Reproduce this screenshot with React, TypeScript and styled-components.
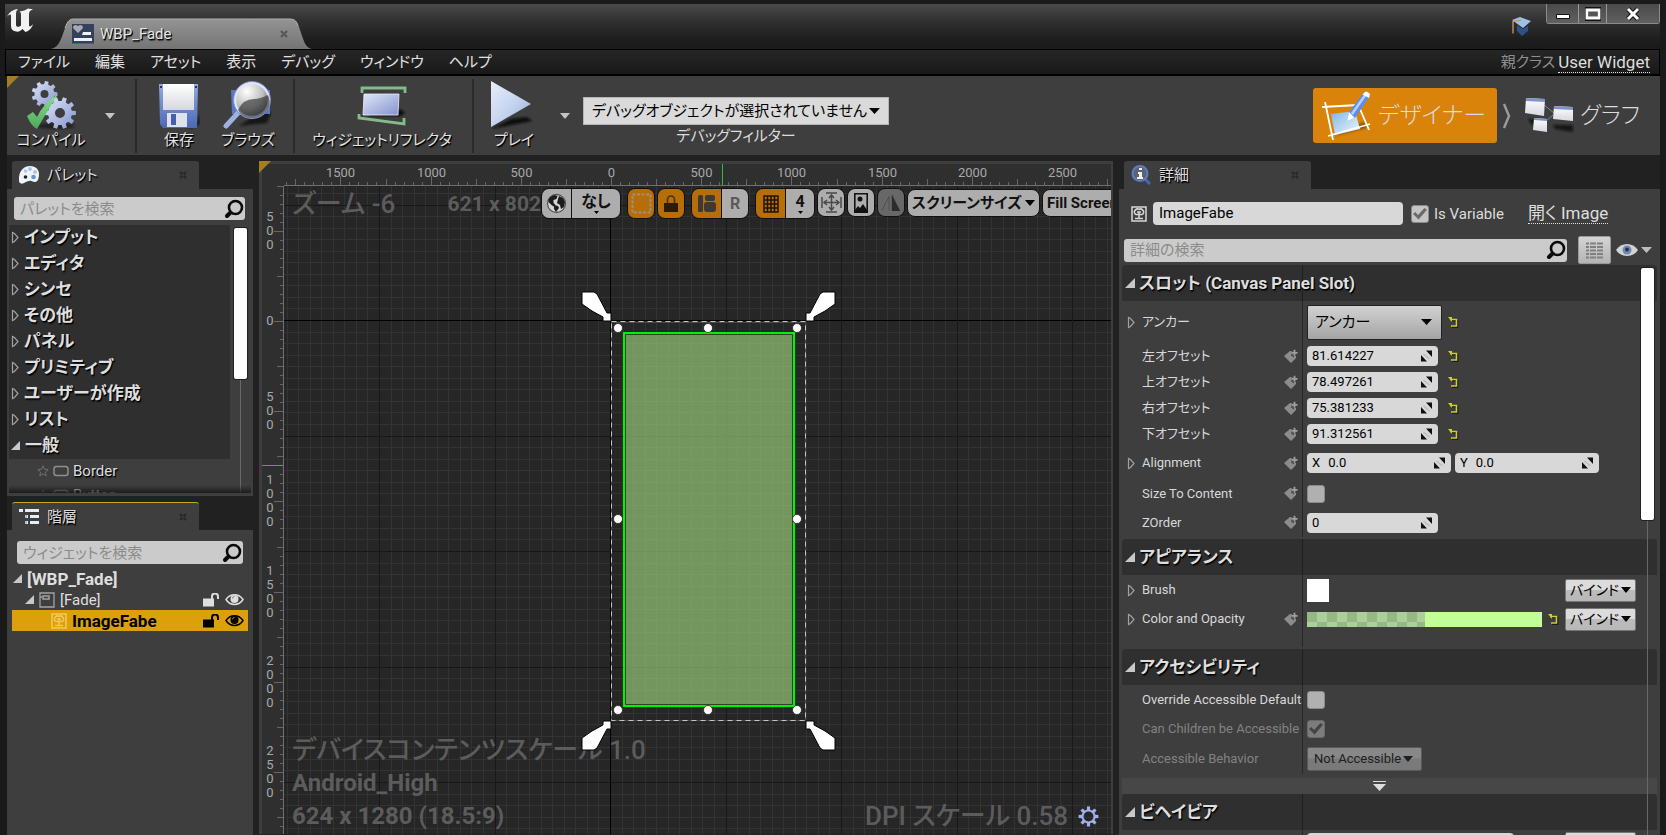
import React from "react";
import styled, { createGlobalStyle, css } from "styled-components";

const GlobalStyle = createGlobalStyle`
  * { box-sizing: border-box; }
  body {
    margin: 0;
    background: #1a1a1a;
    color: #dcdcdc;
    font: 14px/20px Roboto, "Noto Sans CJK JP", sans-serif;
    font-feature-settings: "palt";
    overflow: hidden;
  }
  button, input, select {
    font: inherit;
    font-feature-settings: inherit;
    color: inherit;
    margin: 0;
    padding: 0;
    border: 0;
    border-radius: 0;
    background: none;
  }
  svg { display: block; flex: none; }
  ul { list-style: none; margin: 0; padding: 0; }
`;

const shadow = css`text-shadow: 1px 1px 0 #000, 1px 2px 1px rgba(0, 0, 0, 0.6);`;

const Window = styled.div`
  height: 100vh;
  display: flex;
  flex-direction: column;
  padding: 4px 6px 0 5px;
`;

/* ---------- title bar ---------- */
const TitleBar = styled.header`
  flex: none;
  height: 45px;
  display: flex;
  align-items: flex-start;
  background: linear-gradient(#4b4b4b, #323232 35%, #1d1d1d 80%, #1a1a1a);
`;
const LogoBox = styled.div`
  width: 45px;
  padding: 4px 0 0 1px;
`;
const TabShape = styled.div`
  position: relative;
  width: 262px;
  height: 31px;
  margin-top: 14px;
  padding: 0 24px 0 22px;
  display: flex;
  align-items: center;
  gap: 6px;
  > svg:first-child { position: absolute; left: 0; top: 0; }
  > * { position: relative; }
`;
const TabTitle = styled.span`
  flex: 1;
  font-size: 15px;
  color: #e6e6e6;
  ${shadow}
`;
const WindowTools = styled.div`
  margin-left: auto;
  display: flex;
  align-items: flex-start;
  gap: 14px;
`;
const HatBox = styled.div`padding-top: 12px;`;
const WindowButtons = styled.div`
  display: flex;
  border: 1px solid #8a8a8a;
  border-top: 0;
  border-radius: 0 0 3px 3px;
`;
const WindowButton = styled.button<{ $w: number }>`
  width: ${(p) => p.$w}px;
  height: 19px;
  display: grid;
  place-items: center;
  background: linear-gradient(#4a4a4a, #606060);
  & + & { border-left: 1px solid #999; }
`;

/* ---------- menu ---------- */
const MenuBar = styled.nav`
  flex: none;
  height: 27px;
  display: flex;
  align-items: center;
  gap: 25px;
  padding: 0 9px 0 12px;
  border: 1px solid #000;
  border-bottom-width: 2px;
  background: linear-gradient(#262626, #191919);
  font-size: 15px;
`;
const MenuItem = styled.button`
  color: #e0e0e0;
  white-space: nowrap;
`;
const ParentClass = styled.div`
  margin-left: auto;
  display: flex;
  gap: 3px;
  color: #8f8f8f;
`;
const DottedLink = styled.a`
  color: #dedede;
  font-size: 17px;
  line-height: 20px;
  text-decoration: none;
  border-bottom: 1px dotted #dedede;
  white-space: nowrap;
`;

/* ---------- toolbar ---------- */
const Toolbar = styled.div`
  position: relative;
  flex: none;
  height: 79px;
  margin-left: 2px;
  display: flex;
  align-items: center;
  background: #3e3e3e;
`;
const Corner = styled.span<{ $over?: boolean }>`
  position: absolute;
  left: ${(p) => (p.$over ? -3 : 0)}px;
  top: ${(p) => (p.$over ? -3 : 0)}px;
  width: 12px;
  height: 12px;
  background: #a3801f;
  clip-path: polygon(0 0, 100% 0, 0 100%);
`;
const ToolButton = styled.button<{ $w: number; $after?: number }>`
  width: ${(p) => p.$w}px;
  height: 72px;
  margin-right: ${(p) => p.$after ?? 0}px;
  display: flex;
  flex-direction: column;
  align-items: center;
  color: #e2e2e2;
  font-size: 15px;
  line-height: 20px;
  white-space: nowrap;
  ${shadow}
`;
const ArrowButton = styled.button<{ $w: number; $after: number }>`
  width: ${(p) => p.$w}px;
  height: 72px;
  margin-right: ${(p) => p.$after}px;
  display: grid;
  place-items: center;
`;
const Divider = styled.span`
  width: 2px;
  height: 74px;
  background: #2a2a2a;
`;
const FilterBox = styled.div`
  display: flex;
  flex-direction: column;
  align-items: center;
  gap: 1px;
  padding-top: 12px;
  font-size: 15px;
`;
const SelectBox = styled.div`
  display: grid;
  align-items: center;
  > * { grid-area: 1 / 1; }
  > svg { justify-self: end; margin-right: 9px; pointer-events: none; }
`;
const DebugSelect = styled.select`
  appearance: none;
  width: 306px;
  height: 28px;
  padding-left: 8px;
  background: #dadada;
  border: 1px solid #b5b5b5;
  color: #000;
  font-size: 15px;
`;
const Modes = styled.div`
  margin-left: auto;
  display: flex;
  align-items: center;
  padding-right: 20px;
`;
const ModeButton = styled.button<{ $active?: boolean }>`
  height: 55px;
  padding: 0 ${(p) => (p.$active ? 11 : 0)}px 0 8px;
  display: flex;
  align-items: center;
  gap: ${(p) => (p.$active ? 7 : 5)}px;
  border-radius: 3px;
  background: ${(p) => (p.$active ? "#d9830b" : "none")};
  color: #dcdcdc;
  font-size: 23px;
  font-weight: 300;
  white-space: nowrap;
`;

/* ---------- docks ---------- */
const Workspace = styled.main`
  flex: 1;
  min-height: 0;
  margin-left: 2px;
  padding-top: 6px;
  display: flex;
  gap: 6px;
  background: #212121;
`;
const LeftColumn = styled.div`
  flex: 0 0 246px;
  display: flex;
  flex-direction: column;
  gap: 6px;
`;
const Dock = styled.section<{ $basis?: number }>`
  flex: ${(p) => (p.$basis ? `0 0 ${p.$basis}px` : "1 1 0")};
  min-height: 0;
  min-width: 0;
  display: flex;
  flex-direction: column;
`;
const DetailsDock = styled(Dock)`flex: 0 0 541px;`;
const DockTab = styled.h2<{ $active?: boolean }>`
  flex: none;
  width: 187px;
  height: 28px;
  margin: 0 0 0 5px;
  padding: 0 12px 0 7px;
  display: flex;
  align-items: center;
  gap: 8px;
  border-radius: 3px 3px 0 0;
  border-top: ${(p) => (p.$active ? "1px solid #c9aa1c" : "0")};
  background: #3e3e3e;
  font-size: 15px;
  font-weight: 400;
  ${shadow}
  > span { flex: 1; }
`;
const DockBody = styled.div<{ $pad: string }>`
  flex: 1;
  min-height: 0;
  display: flex;
  flex-direction: column;
  padding: ${(p) => p.$pad};
  background: #3e3e3e;
`;
const SearchBox = styled.label<{ $m: string }>`
  flex: 1 0 auto;
  height: 23px;
  margin: ${(p) => p.$m};
  padding: 0 1px 0 6px;
  display: flex;
  align-items: center;
  border-radius: 3px;
  background: #cbcbcb;
  input {
    flex: 1;
    min-width: 0;
    height: 23px;
    outline: 0;
    color: #222;
    font-size: 15px;
  }
  input::placeholder { color: #8b8b8b; opacity: 1; }
`;
const SearchRow = styled.div`
  flex: none;
  display: flex;
  align-items: center;
`;

/* ---------- palette ---------- */
const PaletteArea = styled.div`
  position: relative;
  flex: 1;
  min-height: 0;
  overflow: hidden;
  padding-right: 21px;
  &::after {
    content: "";
    position: absolute;
    left: 0;
    right: 0;
    bottom: 0;
    height: 8px;
    background: linear-gradient(rgba(20, 20, 20, 0), rgba(20, 20, 20, 0.8));
  }
`;
const PaletteGroup = styled.button`
  width: 100%;
  height: 26px;
  padding: 0 0 2px 2px;
  display: flex;
  align-items: center;
  gap: 5px;
  background: #2f2f2f;
  color: #dedede;
  font-size: 17px;
  font-weight: 700;
  text-align: left;
  ${shadow}
`;
const PaletteItem = styled.li`
  height: 24px;
  padding-left: 28px;
  display: flex;
  align-items: center;
  gap: 4px;
  font-size: 15px;
  ${shadow}
`;
const ScrollTrack = styled.div<{ $right: number; $top: number; $thumb: number }>`
  position: absolute;
  right: ${(p) => p.$right}px;
  top: ${(p) => p.$top}px;
  bottom: 0;
  width: 13px;
  background: linear-gradient(#686868, #686868) center / 1px 100% no-repeat;
  &::before {
    content: "";
    display: block;
    height: ${(p) => p.$thumb}px;
    border-radius: 2px;
    background: #fff;
    box-shadow: 0 0 0 1px #222;
  }
`;

/* ---------- hierarchy ---------- */
const TreeRow = styled.li<{ $indent: number; $selected?: boolean; $strong?: boolean }>`
  height: 21px;
  padding: 0 4px 0 ${(p) => p.$indent}px;
  display: flex;
  align-items: center;
  gap: 5px;
  font-size: ${(p) => (p.$strong ? 17 : 15)}px;
  font-weight: ${(p) => (p.$strong ? 700 : 400)};
  background: ${(p) => (p.$selected ? "#dca00a" : "none")};
  color: ${(p) => (p.$selected ? "#000" : "#dedede")};
  > span { flex: 1; }
`;
const IconButton = styled.button`
  display: grid;
  place-items: center;
`;

/* ---------- designer ---------- */
const Designer = styled.section`
  position: relative;
  flex: 1 1 0;
  min-width: 0;
  margin-bottom: 1px;
  display: grid;
  grid-template: 22px minmax(0, 1fr) / 22px minmax(0, 1fr);
  border: 2px solid #3e3e3e;
  border-left-width: 3px;
  border-top-width: 3px;
  border-bottom: 0;
  background: #2f2f2f;
`;
const RulerSvg = styled.svg`
  width: 100%;
  height: 100%;
  overflow: hidden;
  text { font-size: 13px; fill: #a8a8a8; }
`;
const RulerCell = styled.div`
  min-width: 0;
  min-height: 0;
  overflow: hidden;
`;
const Viewport = styled.div`
  position: relative;
  min-width: 0;
  min-height: 0;
  overflow: hidden;
  background: #262626;
  > svg { position: absolute; inset: 0; width: 100%; height: 100%; }
`;
const Overlay = styled.div`
  position: absolute;
  inset: 0;
  display: flex;
  flex-direction: column;
  justify-content: space-between;
`;
const OverlayText = styled.p<{ $size?: number; $kana?: boolean }>`
  margin: 0;
  font-size: ${(p) => p.$size ?? 24}px;
  line-height: 33px;
  font-weight: ${(p) => (p.$kana ? 500 : 700)};
  color: #5c5c5c;
  white-space: nowrap;
`;
const OverlayTop = styled.div`
  display: flex;
  align-items: flex-start;
  padding: 2px 0 0 8px;
  > p:first-child { flex: 1; }
`;
const OverlayBottom = styled.div`
  display: flex;
  align-items: flex-end;
  justify-content: space-between;
  padding: 0 12px 1px 8px;
`;
const DpiLine = styled.div`
  display: flex;
  align-items: center;
  gap: 10px;
`;
const ViewTools = styled.div`
  flex: 0 0 570px;
  display: flex;
  align-items: flex-start;
  gap: 2px;
  overflow: hidden;
  color: #111;
  font-size: 16px;
  font-weight: 700;
`;
const ToolGroup = styled.div<{ $after?: number }>`
  flex: none;
  display: flex;
  margin-right: ${(p) => p.$after ?? 0}px;
  overflow: hidden;
  border: 1px solid #111;
  border-radius: 8px;
`;
const ViewButton = styled.button<{ $w: number; $h?: number; $tone?: "on" | "off"; $muted?: boolean }>`
  width: ${(p) => p.$w}px;
  height: ${(p) => p.$h ?? 29}px;
  display: flex;
  flex-direction: column;
  align-items: center;
  justify-content: center;
  line-height: 18px;
  color: ${(p) => (p.$muted ? "#5a5a5a" : "#111")};
  background: ${(p) => (p.$tone === "on" ? "#b86e08" : p.$tone === "off" ? "#686868" : "#adadad")};
  & + & { border-left: ${(p) => (p.$muted ? 0 : 1)}px solid #111; }
`;
const DropButton = styled.button<{ $w: number }>`
  flex: none;
  width: ${(p) => p.$w}px;
  height: 28px;
  margin-top: 1px;
  padding: 0 4px;
  display: flex;
  align-items: center;
  gap: 3px;
  border: 1px solid #111;
  border-radius: 8px;
  background: #adadad;
  font-size: 15px;
  white-space: nowrap;
`;

/* ---------- details ---------- */
const NameRow = styled.div`
  display: flex;
  align-items: center;
  height: 23px;
  margin: 0 0 11px 9px;
  font-size: 15px;
`;
const NameInput = styled.input`
  width: 250px;
  height: 23px;
  margin: 0 8px 0 6px;
  padding: 0 6px 1px;
  border-radius: 4px;
  background: #d8d8d8;
  color: #000;
`;
const CheckLabel = styled.label`
  display: flex;
  align-items: center;
  gap: 5px;
  width: 117px;
`;
const Check = styled.input`
  appearance: none;
  width: 18px;
  height: 18px;
  border-radius: 3px;
  border: 1px solid #8a8a8a;
  background: #b0b0b0;
  display: grid;
  place-items: center;
  &:checked { background: #c4c4c4; }
  &:disabled { background: #7c7c7c; border-color: #696969; }
  &:checked::before {
    content: "";
    width: 14px;
    height: 12px;
    background: #6a6a6a;
    clip-path: polygon(0 55%, 16% 38%, 36% 62%, 82% 4%, 100% 18%, 40% 100%);
  }
  &:disabled::before { background: #444; }
`;
const GridButton = styled.button`
  width: 33px;
  height: 28px;
  display: grid;
  place-items: center;
  border: 1px solid #999;
  border-radius: 2px;
  background: linear-gradient(#d4d4d4, #b4b4b4);
  margin: 0 5px 0 11px;
`;
const EyeButton = styled.button`
  display: flex;
  align-items: center;
  gap: 3px;
  margin-right: 5px;
`;
const Properties = styled.div`
  position: relative;
  flex: 1;
  min-height: 0;
  overflow: hidden;
  margin-top: 1px;
`;
const Category = styled.button`
  width: 100%;
  height: 36px;
  display: grid;
  grid-template-columns: 180px 1fr;
  border-radius: 4px 4px 0 0;
  background: linear-gradient(90deg, transparent 180px, #1f1f1f 180px, #1f1f1f 181px, transparent 181px), #2f2f2f;
  color: #dedede;
  font-size: 17px;
  font-weight: 700;
  text-align: left;
  white-space: nowrap;
  > span {
    display: flex;
    align-items: center;
    gap: 4px;
    padding-left: 3px;
  }
  ${shadow}
`;
const Row = styled.div<{ $h: number; $dim?: boolean }>`
  height: ${(p) => p.$h}px;
  display: grid;
  grid-template-columns: 180px minmax(0, 1fr);
  font-size: 13px;
  color: ${(p) => (p.$dim ? "#828282" : "#d8d8d8")};
`;
const LabelCell = styled.div`
  display: flex;
  align-items: center;
  overflow: hidden;
  padding: 0 4px 0 5px;
  white-space: nowrap;
  label { flex: 1 0 auto; padding-left: 1px; }
`;
const Twisty = styled.span`flex: 0 0 14px;`;
const ValueCell = styled.div`
  display: flex;
  align-items: center;
  gap: 4px;
  padding: 0 21px 0 4px;
  border-left: 1px solid #272727;
`;
const Spacer = styled.div<{ $h: number }>`height: ${(p) => p.$h}px;`;
const ResetButton = styled.button<{ $gap?: number }>`
  margin-left: ${(p) => p.$gap ?? 2}px;
`;
const NumberBox = styled.label<{ $w: number }>`
  width: ${(p) => p.$w}px;
  height: 20px;
  padding: 0 6px 0 5px;
  display: flex;
  align-items: center;
  gap: 8px;
  border-radius: 4px;
  background: #d8d8d8;
  color: #000;
  input { flex: 1; min-width: 0; height: 20px; outline: 0; }
`;
const AnchorButton = styled.button`
  width: 135px;
  height: 35px;
  padding: 0 9px 0 7px;
  display: flex;
  align-items: center;
  justify-content: space-between;
  border: 1px solid #222;
  border-radius: 2px;
  background: linear-gradient(#d2d2d2, #a4a4a4);
  color: #000;
  font-size: 15px;
`;
const BindButton = styled.button`
  width: 71px;
  height: 23px;
  margin-left: auto;
  display: flex;
  align-items: center;
  justify-content: center;
  gap: 2px;
  border: 1px solid #777;
  border-radius: 2px;
  background: linear-gradient(#dcdcdc 45%, #bcbcbc 50%, #b8b8b8);
  color: #000;
  font-size: 14px;
`;
const BrushSwatch = styled.button`
  width: 22px;
  height: 23px;
  background: #fff;
`;
const ColorBar = styled.button`
  width: 235px;
  height: 15px;
  background:
    linear-gradient(90deg, transparent 50%, #c1fe98 50%),
    repeating-conic-gradient(#acd09a 0 25%, #97b886 0 50%) 0 0 / 20px 20px;
`;
const BehaviorSelect = styled.select`
  appearance: none;
  width: 115px;
  height: 24px;
  padding-left: 6px;
  border: 1px solid #5a5a5a;
  border-radius: 2px;
  background: linear-gradient(#888 45%, #7a7a7a 50%);
  &:disabled { color: #202020; opacity: 1; }
`;
const MoreBar = styled.button`
  width: 100%;
  height: 16px;
  padding-right: 21px;
  display: grid;
  place-items: center;
  background: #474747;
`;
const TextField = styled.input`
  width: 207px;
  height: 20px;
  border-radius: 4px;
  background: #d8d8d8;
`;

/* ---------- small icons ---------- */
const Caret = ({ w = 11, h = 6, fill = "#000" }: { w?: number; h?: number; fill?: string }) => (
  <svg width={w} height={h} viewBox="0 0 10 6" preserveAspectRatio="none">
    <path d="M0 0h10L5 6z" fill={fill} />
  </svg>
);
const CloseMark = ({ color = "#272727" }: { color?: string }) => (
  <svg width="8" height="8" viewBox="0 0 8 8">
    <path d="M1 1l6 6M7 1L1 7" stroke={color} strokeWidth="2" />
    <path d="M3.500 3.500h1v1h-1z" fill="#777" />
  </svg>
);
const Open = ({ s = 11 }: { s?: number }) => (
  <svg width={s} height={s} viewBox="0 0 10 10">
    <path d="M10 0v10H0z" fill="#c8c8c8" />
  </svg>
);
const Closed = () => (
  <svg width="8" height="13" viewBox="0 0 8 13">
    <path d="M1.500 1.500v10l2-1 3.500-4-3.500-4z" fill="none" stroke="#a2a2a2" strokeWidth="1.200" />
  </svg>
);
const Magnifier = () => (
  <svg width="20" height="20" viewBox="0 0 20 20">
    <circle cx="11.500" cy="8.500" r="6.500" fill="none" stroke="#0a0a0a" strokeWidth="2.600" />
    <path d="M6.500 13.500L3 17" stroke="#0a0a0a" strokeWidth="4" strokeLinecap="round" />
  </svg>
);
const Reset = ({ gap }: { gap?: number }) => (
  <ResetButton $gap={gap} aria-label="Reset to default">
    <svg width="11" height="11" viewBox="0 0 11 11">
      <path d="M2 2.500h6.500V9H3" transform="translate(1 1)" fill="none" stroke="#111" strokeWidth="1.500" />
      <path d="M2 2.500h6.500V9H3" fill="none" stroke="#c9cf36" strokeWidth="1.600" />
      <path d="M0 0h4v5z" fill="#c9cf36" />
    </svg>
  </ResetButton>
);
const Tag = () => (
  <svg width="14" height="15" viewBox="0 0 14 15">
    <path d="M0 7l6-5h3v3h3v4l-5 5z" fill="#8c8c8c" />
    <path d="M10.500 1v6M7.500 4h6" stroke="#3e3e3e" strokeWidth="3.400" />
    <path d="M10.500 0.800v6M7.500 3.800h6" stroke="#a0a0a0" strokeWidth="1.800" />
    <path d="M7 6l3 2" stroke="#3e3e3e" />
  </svg>
);
const SpinMark = () => (
  <svg width="11" height="12" viewBox="0 0 11 12">
    <path d="M5 0.500h6V7zM0 5v6.500h6z" fill="#111" />
    <path d="M2.500 4l6 5" stroke="#bbb" strokeWidth="1.200" />
  </svg>
);
const Eye = ({ color }: { color: string }) => (
  <svg width="19" height="13" viewBox="0 0 19 13">
    <path d="M1 6.500C5 0 14 0 18 6.500 14 13 5 13 1 6.500z" fill="none" stroke={color} strokeWidth="1.500" />
    <circle cx="9.500" cy="6" r="4" fill={color} />
    <path d="M7.500 5.500a2 2 0 012-2" fill="none" stroke="#888" />
  </svg>
);
const Unlock = ({ color }: { color: string }) => (
  <svg width="17" height="14" viewBox="0 0 17 14">
    <path d="M0 5.500h11v8H0z" fill={color} />
    <path d="M9 6V3.500a3 3 0 016 0V6" fill="none" stroke={color} strokeWidth="2" />
  </svg>
);
const ImageIcon = ({ color }: { color: string }) => (
  <svg width="16" height="16" viewBox="0 0 16 16" fill="none" stroke={color}>
    <path d="M1 1h14v14H1z" strokeWidth="1.500" />
    <path d="M5 8.500a2.500 2.500 0 01-.5-4.500 2.500 2.500 0 013.500-.5 2.500 2.500 0 013.500.5 2.500 2.500 0 01-.5 4.500z" strokeWidth="1.500" />
    <path d="M6 6h4M8 6v6M4 12.500h8" strokeWidth="1.500" />
  </svg>
);

/* ---------- gradients shared by the large icons ---------- */
const DefsSvg = styled.svg`position: absolute;`;
const Defs = () => (
  <DefsSvg width="0" height="0">
    <defs>
      <linearGradient id="steel" x1="0" y1="0" x2="1" y2="1">
        <stop offset="0" stopColor="#dfe6fa" />
        <stop offset="1" stopColor="#8494cc" />
      </linearGradient>
      <linearGradient id="blue" x1="0" y1="0" x2="0" y2="1">
        <stop offset="0" stopColor="#93aadf" />
        <stop offset="1" stopColor="#4c68b4" />
      </linearGradient>
      <linearGradient id="paper" x1="0" y1="0" x2="0" y2="1">
        <stop offset="0" stopColor="#ffffff" />
        <stop offset="1" stopColor="#d5d8e0" />
      </linearGradient>
      <linearGradient id="play" x1="0" y1="0" x2="1" y2="1">
        <stop offset="0" stopColor="#e9eefc" />
        <stop offset="0.550" stopColor="#c3d3ee" />
        <stop offset="1" stopColor="#94a4d6" />
      </linearGradient>
      <linearGradient id="tick" x1="0" y1="0" x2="0" y2="1">
        <stop offset="0" stopColor="#8fe08c" />
        <stop offset="1" stopColor="#4ba85a" />
      </linearGradient>
      <linearGradient id="sky" x1="0" y1="0" x2="1" y2="1">
        <stop offset="0" stopColor="#7fb4e6" />
        <stop offset="1" stopColor="#f2fafd" />
      </linearGradient>
      <linearGradient id="tab" x1="0" y1="0" x2="0" y2="1">
        <stop offset="0" stopColor="#949494" />
        <stop offset="1" stopColor="#747474" />
      </linearGradient>
      <radialGradient id="lens" cx="0.350" cy="0.250" r="0.800">
        <stop offset="0" stopColor="#ffffff" />
        <stop offset="0.600" stopColor="#bdbdbd" />
        <stop offset="1" stopColor="#4a4a4a" />
      </radialGradient>
      <filter id="soft" x="-20%" y="-50%" width="140%" height="200%">
        <feGaussianBlur stdDeviation="1" />
      </filter>
    </defs>
  </DefsSvg>
);

const gearPath = (cx: number, cy: number, r: number, teeth: number, hole: number, depth: number) => {
  const pts: string[] = [];
  const step = (Math.PI * 2) / teeth;
  for (let i = 0; i < teeth; i++) {
    const a = i * step;
    [[-0.3, r - depth], [-0.2, r], [0.2, r], [0.3, r - depth]].forEach(([k, rad]) => {
      pts.push(`${(cx + Math.cos(a + k * step) * rad).toFixed(2)} ${(cy + Math.sin(a + k * step) * rad).toFixed(2)}`);
    });
  }
  return `M${pts.join("L")}Z M${cx - hole} ${cy}a${hole} ${hole} 0 1 0 ${hole * 2} 0a${hole} ${hole} 0 1 0 ${-hole * 2} 0Z`;
};

const CompileIcon = () => (
  <svg width="50" height="50" viewBox="0 0 50 50">
    <ellipse cx="30" cy="46" rx="19" ry="3" fill="#111" opacity="0.600" filter="url(#soft)" />
    <path d={gearPath(18.5, 14, 13, 9, 4, 3)} fill="url(#steel)" fillRule="evenodd" />
    <path d={gearPath(34, 33, 16, 10, 5, 4)} fill="url(#steel)" fillRule="evenodd" />
    <path d="M1 36l6-4 4 5Q17 24 32 14 22 30 11 49 5 46 1 36z" fill="url(#tick)" />
  </svg>
);
const SaveIcon = () => (
  <svg width="42" height="50" viewBox="0 0 42 50">
    <path d="M5 44l33-2 4-8v10l-8 4z" fill="#111" opacity="0.700" filter="url(#soft)" />
    <path d="M1 4h39l-1 44H5l-3-4z" fill="url(#blue)" />
    <path d="M5 4h31v26H5z" fill="url(#paper)" />
    <path d="M9 33h20v14H9z" fill="#dfe2ea" />
    <path d="M13 34h5v11h-5z" fill="#4661ab" />
    <path d="M2 6h2v2H2zM37 6h2v2h-2z" fill="#26355f" />
  </svg>
);
const BrowseIcon = () => (
  <svg width="50" height="50" viewBox="0 0 50 50">
    <path d="M16 46l28-3 4-10-8-3z" fill="#0c0c0c" opacity="0.800" filter="url(#soft)" />
    <path d="M8 10h39v24H9z" fill="#5b78c0" />
    <path d="M15 33L3 46" stroke="#9fb0e0" strokeWidth="5" strokeLinecap="round" />
    <circle cx="29" cy="20" r="17" fill="url(#lens)" stroke="#dfe6fb" strokeWidth="2.500" />
    <path d="M15 30q5-11 16-11 6 0 14-4a16 16 0 01-30 15z" fill="#333" opacity="0.650" />
    <circle cx="29" cy="20" r="18.500" fill="none" stroke="#7d92cc" />
  </svg>
);
const ReflectorIcon = () => (
  <svg width="50" height="50" viewBox="0 0 50 50">
    <path d="M10 36h34l4-4-6-3z" fill="#0d0d0d" filter="url(#soft)" />
    <path d="M7 14h35l-1 21H6z" fill="url(#steel)" stroke="#eef" strokeWidth="0.800" />
    <path d="M5 13V8h43v5M2 34v4l45 6v-6" fill="none" stroke="#84bb8b" strokeWidth="2.800" />
  </svg>
);
const PlayIcon = () => (
  <svg width="48" height="50" viewBox="0 0 48 50">
    <path d="M1 49l41-8-5-4-16 2z" fill="#0d0d0d" filter="url(#soft)" />
    <path d="M1 1l40 23L1 47z" fill="url(#play)" />
  </svg>
);
const DesignIcon = () => (
  <svg width="50" height="52" viewBox="0 0 50 52">
    <path d="M14 46l32-8-2-6-14 4z" fill="#5d3a06" opacity="0.600" filter="url(#soft)" />
    <path d="M10 24l24-3 5 18-25 6z" fill="url(#sky)" />
    <path d="M1 17l36-2M4 12l8 38M7 46l42-12M36 12l12 28" stroke="#fff" strokeWidth="1.800" fill="none" />
    <path d="M28 22L43 2l6 4-15 22-8 3z" fill="#5f8fe2" />
    <path d="M31 24L45 4" stroke="#b7d0f8" strokeWidth="2.500" />
    <path d="M42 4q3-5 7 0l-1 4-7-4zM26 31l2-9 6 6z" fill="#fff" />
  </svg>
);
const GraphIcon = () => (
  <svg width="50" height="38" viewBox="0 0 50 38">
    <path d="M3 22h12v6H7zM28 28h20v7l-18-3z" fill="#101010" opacity="0.800" filter="url(#soft)" />
    <path d="M19 8l10 8M19 26l9-8" stroke="#7c87ae" fill="none" />
    <path d="M1 1l19 1-1 17-19-3z" fill="url(#paper)" />
    <path d="M1 1l19 1v3L1 4z" fill="#8292c4" />
    <path d="M29 9l19 1v14l-20-2z" fill="url(#paper)" />
    <path d="M29 9l19 1v3l-19-1z" fill="#8292c4" />
    <path d="M9 21l13 1v13L8 33z" fill="url(#paper)" />
    <path d="M9 21l13 1v2L9 23z" fill="#8292c4" />
  </svg>
);
const UnrealLogo = () => (
  <svg width="28" height="25" viewBox="0 0 28 25">
    <path
      d="M1 9C3 4 7 1.500 12 1c-1.500 1.500-2 3-2 5v11c0 2 3 2.500 5 .5V6.500c0-1.500-.5-2.500-1.500-3C17 3 20 2 22 .5c2 .5 3.500.5 5 .5-3 1.500-4 3-4 5v11c0 2 2 2 4-1-1 4-4 7-7.500 8L16.500 21c-2 2-4 3-6.500 2.500C6.500 23 5 21 5 18V7.500C5 6 3 6 1 9z"
      fill="#f2f2f2"
    />
  </svg>
);
const HatIcon = () => (
  <svg width="21" height="20" viewBox="0 0 21 20">
    <path d="M6 9l6 4 5-3v5l-6 5-5-5z" fill="#2f5283" />
    <path d="M1 4l8-3 11 4-8 7z" fill="#9cc0e6" />
    <path d="M10 4L2 5.500v12" stroke="#c29b62" strokeWidth="1.300" fill="none" />
  </svg>
);
const WidgetIcon = () => (
  <svg width="22" height="20" viewBox="0 0 22 20">
    <path d="M0 0h22v20H0z" fill="#33415c" />
    <path d="M0 19h22v1H0z" fill="#2b62c4" />
    <path d="M6 9L1 4q0-3 3-3l2 1 2-1q3 0 3 3z" fill="#a9a9b4" />
    <path d="M11 8h8v3h-9zM2 14h18v3H2z" fill="#eef2f6" />
  </svg>
);
const PaletteIcon = () => (
  <svg width="20" height="18" viewBox="0 0 20 18">
    <path d="M11 0c6 0 9 4 9 8 0 6-2 8-4 8-3 0-3-2-6-1-2 0-3 1-5 2-4 2-6-1-5-6C1 4 5 0 11 0z" fill="#f1f5fa" />
    <circle cx="6.500" cy="5" r="1.800" fill="#a9cbe8" />
    <circle cx="11" cy="3" r="1.900" fill="#9ec4ea" />
    <circle cx="16" cy="6" r="2" fill="#a7c8ea" />
    <circle cx="14.500" cy="11" r="2.300" fill="#5f9ad8" />
    <circle cx="6.500" cy="11" r="1.800" fill="#222" />
  </svg>
);
const TreeIcon = () => (
  <svg width="20" height="17" viewBox="0 0 20 17">
    <path d="M0 1h4v3H0zM6 1h14v3H6zM6 7h3v3H6zM11 7h9v3h-9zM6 13h3v3H6zM11 13h9v3h-9z" fill="#e3eff5" />
    <path d="M6 7h2v3H6zM6 13h2v3H6z" fill="#9fc3dc" />
  </svg>
);
const InfoIcon = () => (
  <svg width="20" height="20" viewBox="0 0 20 20">
    <path d="M14 14l5 5" stroke="#4668b4" strokeWidth="3" />
    <circle cx="9" cy="8.500" r="7.500" fill="#5c6370" stroke="#5b7cc4" strokeWidth="2" />
    <path d="M8 3h3v2H8zM7 7h4v5h1v2H6v-2h2V9H7z" fill="#f0f0f0" />
  </svg>
);
const GlobeIcon = () => (
  <svg width="21" height="21" viewBox="0 0 21 21">
    <circle cx="10.500" cy="10.500" r="9" fill="#d5d5d5" stroke="#555" strokeWidth="1.300" />
    <path d="M2.500 6q2-3 6-4l3 1-1 3-3 1v3l2 2-1 2-3-2-3-3zM8 12l4 1 1 2-3 4-2-3zM13 3l4 2 2 4-1 5-3 2-1-4-3-2 1-4z" fill="#1c1c1c" />
  </svg>
);

/* ---------- designer drawing ---------- */
const GRID = 11.55;
const TICK = 9.02;
const ORIGIN = { x: 326, y: 134 };

const GridLines = () => {
  const lines: React.ReactNode[] = [];
  const draw = (major: boolean) => {
    for (let i = -40; i < 160; i++) {
      if ((i % 10 === 0) !== major) continue;
      const color = i === 0 ? "#000" : major ? "#181818" : "#333";
      const x = Math.round(ORIGIN.x + i * GRID) + 0.5;
      const y = Math.round(ORIGIN.y + i * GRID) + 0.5;
      lines.push(<path key={`v${i}`} d={`M${x} 0V2000`} stroke={color} />);
      lines.push(<path key={`h${i}`} d={`M0 ${y}H3000`} stroke={color} />);
    }
  };
  draw(false);
  draw(true);
  return <g>{lines}</g>;
};

const Selection = () => {
  const columns = [334, 424, 513];
  const rows = [142, 333, 524];
  return (
    <g>
      <path d="M327.500 136.500H521.500V534.500H327.500Z" fill="none" stroke="#4a4a4a" />
      <path d="M327.500 135.500H521.500V534.500H327.500Z" fill="none" stroke="#c4c4c4" strokeDasharray="5 4" />
      <path d="M340 147H510V520H340Z" fill="rgba(160, 214, 128, 0.640)" stroke="#00f400" strokeWidth="2" />
      <path d="M341.500 148.500H508.500V518.500H341.500Z" fill="none" stroke="#2c4423" />
      {rows.flatMap((y, r) =>
        columns.map((x, c) =>
          r === 1 && c === 1 ? null : (
            <circle key={`${x}-${y}`} cx={x} cy={y} r="4.500" fill="#fff" stroke="#222" strokeWidth="0.800" />
          )
        )
      )}
      {[
        [327, 135, 1, 1],
        [522, 135, -1, 1],
        [327, 535, 1, -1],
        [522, 535, -1, -1],
      ].map(([x, y, sx, sy]) => (
        <path
          key={`${x}-${y}`}
          d="M0 0H-8V-4L-19 -10L-29 -17V-29H-17L-14 -27L-4 -8H0Z"
          transform={`translate(${x} ${y}) scale(${sx} ${sy})`}
          fill="#fff"
          stroke="#000"
          strokeWidth="1"
        />
      ))}
    </g>
  );
};

const tickLength = (i: number) => (i % 10 === 0 ? 9 : i % 5 === 0 ? 6 : 3);

const TopRuler = () => {
  const parts: React.ReactNode[] = [];
  for (let i = -40; i < 160; i++) {
    const x = Math.round(327 + i * TICK) + 0.5;
    parts.push(<path key={i} d={`M${x} 21V${21 - tickLength(i)}`} stroke="#666" />);
    if (i % 10 === 0) {
      parts.push(
        <text key={`t${i}`} x={x} y={13} textAnchor="middle">{Math.abs(i * 50)}</text>
      );
    }
  }
  return (
    <RulerSvg>
      {parts}
      <path d="M0 21.500H3000" stroke="#707070" />
      <path d="M438.500 0V21" stroke="#27c427" />
    </RulerSvg>
  );
};

const SideRuler = () => {
  const parts: React.ReactNode[] = [];
  for (let i = -20; i < 120; i++) {
    const y = Math.round(135 + i * TICK) + 0.5;
    parts.push(<path key={i} d={`M21 ${y}H${21 - tickLength(i)}`} stroke="#666" />);
    if (i % 10 === 0) {
      const digits = String(Math.abs(i * 50)).split("");
      digits.forEach((d, n) => {
        parts.push(
          <text key={`t${i}-${n}`} x={8} y={y + 3 - 7 * (digits.length - 1) + n * 14} textAnchor="middle">{d}</text>
        );
      });
    }
  }
  return (
    <RulerSvg>
      {parts}
      <path d="M21.500 0V2000" stroke="#707070" />
      <path d="M0 279.500H21" stroke="#27c427" />
    </RulerSvg>
  );
};

/* ---------- page data ---------- */
const menu = ["ファイル", "編集", "アセット", "表示", "デバッグ", "ウィンドウ", "ヘルプ"];
const groups = ["インプット", "エディタ", "シンセ", "その他", "パネル", "プリミティブ", "ユーザーが作成", "リスト"];
const offsets = [
  ["左オフセット", "81.614227"],
  ["上オフセット", "78.497261"],
  ["右オフセット", "75.381233"],
  ["下オフセット", "91.312561"],
];

const PropertyRow = ({
  label, h, id, twisty, tag, dim, children,
}: {
  label: string; h: number; id: string; twisty?: boolean; tag?: boolean; dim?: boolean; children: React.ReactNode;
}) => (
  <Row $h={h} $dim={dim}>
    <LabelCell>
      <Twisty>{twisty && <Closed />}</Twisty>
      <label htmlFor={id}>{label}</label>
      {tag && <Tag />}
    </LabelCell>
    <ValueCell>{children}</ValueCell>
  </Row>
);

const Section = ({ title }: { title: string }) => (
  <Category><span><Open s={10} />{title}</span></Category>
);

const NumberField = ({ id, value, w = 131, prefix }: { id: string; value: string; w?: number; prefix?: string }) => (
  <NumberBox $w={w}>
    {prefix}
    <input id={id} aria-label={prefix ?? id} defaultValue={value} />
    <SpinMark />
  </NumberBox>
);

export default function App() {
  return (
    <Window>
      <GlobalStyle />
      <Defs />
      <TitleBar>
        <LogoBox><UnrealLogo /></LogoBox>
        <TabShape>
          <svg width="262" height="31" viewBox="0 0 262 31">
            <path d="M0 31C8 30 10 24 14 13 18 2 19 1 24 1H240c6 0 7 3 9 8 5 14 6 21 13 22z" fill="url(#tab)" />
            <path d="M15 10C18 2 20 1 24 1H240c5 0 7 3 8 7" fill="none" stroke="#b0b0b0" />
          </svg>
          <WidgetIcon />
          <TabTitle>WBP_Fade</TabTitle>
          <CloseMark color="#555" />
        </TabShape>
        <WindowTools>
          <HatBox><HatIcon /></HatBox>
          <WindowButtons>
            <WindowButton $w={31} aria-label="Minimize">
              <svg width="14" height="12" viewBox="0 0 14 12"><path d="M0.500 6.500h13v4h-13z" fill="#fff" stroke="#111" /></svg>
            </WindowButton>
            <WindowButton $w={28} aria-label="Maximize">
              <svg width="16" height="14" viewBox="0 0 16 14">
                <path d="M2 2h12v10H2z" fill="none" stroke="#111" strokeWidth="4" />
                <path d="M2 3h12v8H2z" fill="none" stroke="#fff" strokeWidth="2.800" />
              </svg>
            </WindowButton>
            <WindowButton $w={53} aria-label="Close">
              <svg width="14" height="14" viewBox="0 0 14 14">
                <path d="M2 2l10 10M12 2L2 12" stroke="#111" strokeWidth="5" />
                <path d="M2 2l10 10M12 2L2 12" stroke="#fff" strokeWidth="3" />
              </svg>
            </WindowButton>
          </WindowButtons>
        </WindowTools>
      </TitleBar>

      <MenuBar>
        {menu.map((m) => <MenuItem key={m}>{m}</MenuItem>)}
        <ParentClass>親クラス<DottedLink href="#">User Widget</DottedLink></ParentClass>
      </MenuBar>

      <Toolbar>
        <Corner />
        <ToolButton $w={88}><CompileIcon />コンパイル</ToolButton>
        <ArrowButton $w={30} $after={10} aria-label="コンパイル オプション"><Caret fill="#c4c4c4" w={10} /></ArrowButton>
        <Divider />
        <ToolButton $w={84}><SaveIcon />保存</ToolButton>
        <ToolButton $w={54} $after={18}><BrowseIcon />ブラウズ</ToolButton>
        <Divider />
        <ToolButton $w={174} $after={3}><ReflectorIcon />ウィジェットリフレクタ</ToolButton>
        <Divider />
        <ToolButton $w={80}><PlayIcon />プレイ</ToolButton>
        <ArrowButton $w={22} $after={7} aria-label="プレイ オプション"><Caret fill="#c4c4c4" w={10} /></ArrowButton>
        <FilterBox>
          <SelectBox>
            <DebugSelect id="debug"><option>デバッグオブジェクトが選択されていません</option></DebugSelect>
            <Caret />
          </SelectBox>
          <label htmlFor="debug">デバッグフィルター</label>
        </FilterBox>
        <Modes>
          <ModeButton $active><DesignIcon />デザイナー</ModeButton>
          <svg width="20" height="26" viewBox="0 0 20 26"><path d="M7 1l5 12-5 12" fill="none" stroke="#999" strokeWidth="2.500" /></svg>
          <ModeButton><GraphIcon />グラフ</ModeButton>
        </Modes>
      </Toolbar>

      <Workspace>
        <LeftColumn>
          <Dock $basis={335}>
            <DockTab><PaletteIcon /><span>パレット</span><CloseMark /></DockTab>
            <DockBody $pad="8px 2px 3px">
              <SearchRow>
                <SearchBox $m="0 6px 5px 5px"><input aria-label="パレット検索" placeholder="パレットを検索" /><Magnifier /></SearchBox>
              </SearchRow>
              <PaletteArea>
                {groups.map((g) => <PaletteGroup key={g}><Closed />{g}</PaletteGroup>)}
                <PaletteGroup><Open s={9} />一般</PaletteGroup>
                <ul>
                  {["Border", "Button"].map((n) => (
                    <PaletteItem key={n}>
                      <svg width="12" height="12" viewBox="0 0 12 12"><path d="M6 .8l1.500 3.400 3.700.4-2.800 2.500.8 3.700L6 8.900l-3.200 1.900.8-3.700L.8 4.600l3.700-.4z" fill="none" stroke="#707070" /></svg>
                      <svg width="16" height="12" viewBox="0 0 16 12"><rect x="1" y="1.500" width="14" height="9" rx="2.500" fill="none" stroke="#8f8f8f" strokeWidth="1.500" /></svg>
                      {n}
                    </PaletteItem>
                  ))}
                </ul>
                <ScrollTrack $right={4} $top={3} $thumb={151} />
              </PaletteArea>
            </DockBody>
          </Dock>
          <Dock>
            <DockTab $active><TreeIcon /><span>階層</span><CloseMark /></DockTab>
            <DockBody $pad="11px 5px 0">
              <SearchRow>
                <SearchBox $m="0 5px 4px"><input aria-label="ウィジェット検索" placeholder="ウィジェットを検索" /><Magnifier /></SearchBox>
              </SearchRow>
              <ul>
                <TreeRow $indent={1} $strong><Open s={9} /><span>[WBP_Fade]</span></TreeRow>
                <TreeRow $indent={13}>
                  <Open s={9} />
                  <svg width="16" height="16" viewBox="0 0 16 16" fill="none" stroke="#a4a4a4"><path d="M1 1h14v14H1z" strokeWidth="1.300" /><path d="M1 5h2M4 4h6v3H4z" strokeWidth="1.500" /></svg>
                  <span>[Fade]</span>
                  <IconButton aria-label="Lock"><Unlock color="#dedede" /></IconButton>
                  <IconButton aria-label="Visible"><Eye color="#dedede" /></IconButton>
                </TreeRow>
                <TreeRow $indent={39} $selected $strong>
                  <ImageIcon color="#f3c85c" />
                  <span>ImageFabe</span>
                  <IconButton aria-label="Lock"><Unlock color="#000" /></IconButton>
                  <IconButton aria-label="Visible"><Eye color="#000" /></IconButton>
                </TreeRow>
              </ul>
            </DockBody>
          </Dock>
        </LeftColumn>

        <Designer>
          <RulerCell />
          <RulerCell><TopRuler /></RulerCell>
          <RulerCell><SideRuler /></RulerCell>
          <Viewport>
            <svg><GridLines /></svg>
            <Overlay>
              <OverlayTop>
                <OverlayText $size={26} $kana>ズーム -6</OverlayText>
                <OverlayText $size={21}>621 x 802</OverlayText>
                <ViewTools>
                  <ToolGroup $after={4}>
                    <ViewButton $w={29} aria-label="Localization"><GlobeIcon /></ViewButton>
                    <ViewButton $w={49}>なし<Caret w={5} h={3} /></ViewButton>
                  </ToolGroup>
                  <ToolGroup>
                    <ViewButton $w={26} $tone="on" aria-label="Outline">
                      <svg width="21" height="21" viewBox="0 0 21 21"><path d="M1.500 1.500h18v18h-18z" fill="none" stroke="#9c917c" strokeWidth="2" strokeDasharray="3 1.500" /></svg>
                    </ViewButton>
                  </ToolGroup>
                  <ToolGroup $after={4}>
                    <ViewButton $w={26} $tone="on" aria-label="Respect locks">
                      <svg width="14" height="17" viewBox="0 0 14 17"><path d="M0 8h14v9H0z" fill="#2b1c05" /><path d="M3.500 8V4.500a3.500 3.500 0 017 0V8" fill="none" stroke="#4a3310" strokeWidth="1.600" /></svg>
                    </ViewButton>
                  </ToolGroup>
                  <ToolGroup $after={4}>
                    <ViewButton $w={29} $tone="on" aria-label="Layout transform">
                      <svg width="18" height="17" viewBox="0 0 18 17" fill="#3c3a36"><rect width="5" height="17" rx="1.500" /><rect x="7" width="10" height="6" rx="2" /><rect x="6" y="7" width="12" height="10" rx="3" /></svg>
                    </ViewButton>
                    <ViewButton $w={27} $muted>R</ViewButton>
                  </ToolGroup>
                  <ToolGroup>
                    <ViewButton $w={29} $tone="on" aria-label="Grid snapping">
                      <svg width="16" height="18" viewBox="0 0 16 18"><path d="M1 1h14v16H1zM4.500 1v16M8 1v16M11.500 1v16M1 5h14M1 9h14M1 13h14" fill="none" stroke="#1f1404" strokeWidth="1.500" /></svg>
                    </ViewButton>
                    <ViewButton $w={29}>4<Caret w={5} h={3} /></ViewButton>
                  </ToolGroup>
                  <ToolGroup>
                    <ViewButton $w={26} $h={27} aria-label="Zoom to fit">
                      <svg width="21" height="21" viewBox="0 0 21 21" fill="none" stroke="#484848" strokeWidth="1.500"><path d="M5 1h11M5 20h11M1 5v11M20 5v11M10.500 3v15M3 10.500h15" /><path d="M8 6l2.500-3L13 6M8 15l2.500 3 2.500-3M6 8l-3 2.500L6 13M15 8l3 2.500-3 2.500" /></svg>
                    </ViewButton>
                  </ToolGroup>
                  <ToolGroup>
                    <ViewButton $w={26} $h={27} aria-label="Portrait">
                      <svg width="14" height="20" viewBox="0 0 14 20"><path d="M.8.8h12.400v18.400H.8z" fill="none" stroke="#111" strokeWidth="1.600" /><circle cx="6" cy="6" r="2.500" fill="#111" /><path d="M1 19v-2l3-4 2 2 3-4 4 6v2z" fill="#111" /></svg>
                    </ViewButton>
                  </ToolGroup>
                  <ToolGroup>
                    <ViewButton $w={26} $h={27} $tone="off" aria-label="Mirror">
                      <svg width="20" height="16" viewBox="0 0 20 16"><path d="M1 15.500L8 1.500v14M11 0l8 16h-8z" fill="none" stroke="#4e4e4e" /><path d="M11 0l8 16h-8z" fill="#2c2c2c" /></svg>
                    </ViewButton>
                  </ToolGroup>
                  <DropButton $w={133}>スクリーンサイズ<Caret w={10} /></DropButton>
                  <DropButton $w={110}>Fill Screen<Caret w={10} /></DropButton>
                </ViewTools>
              </OverlayTop>
              <OverlayBottom>
                <div>
                  <OverlayText $size={26} $kana>デバイスコンテンツスケール 1.0</OverlayText>
                  <OverlayText>Android_High</OverlayText>
                  <OverlayText>624 x 1280 (18.5:9)</OverlayText>
                </div>
                <DpiLine>
                  <OverlayText $size={26} $kana>DPI スケール 0.58</OverlayText>
                  <IconButton aria-label="DPI settings">
                    <svg width="21" height="21" viewBox="0 0 21 21"><path d={gearPath(10.5, 10.5, 10, 8, 5, 3)} fill="#9fb3ea" fillRule="evenodd" /></svg>
                  </IconButton>
                </DpiLine>
              </OverlayBottom>
            </Overlay>
            <svg pointerEvents="none"><Selection /></svg>
          </Viewport>
          <Corner $over />
        </Designer>

        <DetailsDock>
          <DockTab><InfoIcon /><span>詳細</span><CloseMark /></DockTab>
          <DockBody $pad="13px 3px 0">
            <NameRow>
              <ImageIcon color="#d8d8d8" />
              <NameInput aria-label="Name" defaultValue="ImageFabe" />
              <CheckLabel><Check type="checkbox" defaultChecked />Is Variable</CheckLabel>
              <DottedLink href="#">開く Image</DottedLink>
            </NameRow>
            <SearchRow>
              <SearchBox $m="0 0 0 2px"><input aria-label="詳細検索" placeholder="詳細の検索" /><Magnifier /></SearchBox>
              <GridButton aria-label="Property matrix">
                <svg width="17" height="19" viewBox="0 0 17 19"><path d="M0 2.500h3m1 0h6m1 0h6M0 6h3m1 0h6m1 0h6M0 9.500h3m1 0h6m1 0h6M0 13h3m1 0h6m1 0h6M0 16.500h3m1 0h6m1 0h6" stroke="#808080" strokeWidth="2.200" /></svg>
              </GridButton>
              <EyeButton aria-label="View options">
                <svg width="22" height="14" viewBox="0 0 22 14"><path d="M0 7C5-1 17-1 22 7 17 15 5 15 0 7z" fill="#d3d3d3" /><circle cx="11" cy="7" r="4.500" fill="#6f88b8" /><circle cx="11" cy="6.500" r="2" fill="#26344f" /></svg>
                <Caret fill="#bdbdbd" />
              </EyeButton>
            </SearchRow>
            <Properties>
              <Section title="スロット (Canvas Panel Slot)" />
              <PropertyRow label="アンカー" id="anchor" h={42} twisty>
                <AnchorButton id="anchor">アンカー<Caret /></AnchorButton><Reset />
              </PropertyRow>
              {offsets.map(([name, value]) => (
                <PropertyRow key={name} label={name} id={name} h={26} tag>
                  <NumberField id={name} value={value} /><Reset gap={6} />
                </PropertyRow>
              ))}
              <PropertyRow label="Alignment" id="alignment" h={32} twisty tag>
                <NumberField id="alignment" prefix="X" value="0.0" w={144} />
                <NumberField id="alignment-y" prefix="Y" value="0.0" w={144} />
              </PropertyRow>
              <PropertyRow label="Size To Content" id="stc" h={29} tag><Check type="checkbox" id="stc" /></PropertyRow>
              <PropertyRow label="ZOrder" id="zorder" h={29} tag><NumberField id="zorder" value="0" /></PropertyRow>
              <Spacer $h={2} />
              <Section title="アピアランス" />
              <PropertyRow label="Brush" id="brush" h={30} twisty>
                <BrushSwatch id="brush" /><BindButton>バインド<Caret w={10} /></BindButton>
              </PropertyRow>
              <PropertyRow label="Color and Opacity" id="color" h={28} twisty tag>
                <ColorBar id="color" /><Reset /><BindButton>バインド<Caret w={10} /></BindButton>
              </PropertyRow>
              <Row $h={14}><span /><ValueCell /></Row>
              <Spacer $h={2} />
              <Section title="アクセシビリティ" />
              <PropertyRow label="Override Accessible Defaults" id="oad" h={29}><Check type="checkbox" id="oad" /></PropertyRow>
              <PropertyRow label="Can Children be Accessible" id="ccb" h={29} dim><Check type="checkbox" id="ccb" defaultChecked disabled /></PropertyRow>
              <PropertyRow label="Accessible Behavior" id="ab" h={31} dim>
                <SelectBox>
                  <BehaviorSelect id="ab" disabled><option>Not Accessible</option></BehaviorSelect>
                  <Caret w={10} fill="#202020" />
                </SelectBox>
              </PropertyRow>
              <Spacer $h={4} />
              <MoreBar aria-label="Show advanced">
                <svg width="13" height="10" viewBox="0 0 13 10"><path d="M0 0h13v1H0zM0 3h13L6.500 10z" fill="#dcdcdc" /></svg>
              </MoreBar>
              <Section title="ビヘイビア" />
              <Row $h={26}>
                <span />
                <ValueCell><TextField aria-label="Tool tip" /><BindButton>バインド<Caret w={10} /></BindButton></ValueCell>
              </Row>
              <ScrollTrack $right={3} $top={3} $thumb={252} />
            </Properties>
          </DockBody>
        </DetailsDock>
      </Workspace>
    </Window>
  );
}
